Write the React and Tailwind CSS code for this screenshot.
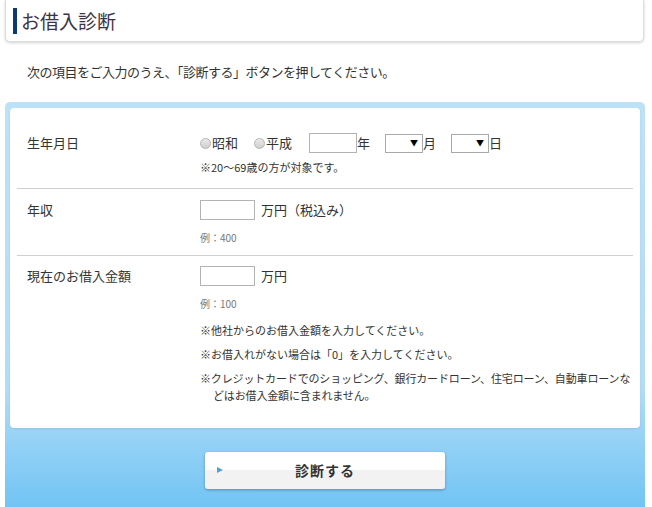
import React from "react";

const jp = { fontFamily: '"Noto Sans CJK JP", "Noto Sans", sans-serif' };

const Radio = ({ label }) => (
  <label className="flex items-center">
    <span className="w-[11px] h-[11px] rounded-full border border-[#b5b5b5] bg-gradient-to-b from-[#e9e9e9] to-[#cfcfcf]"></span>
    <span className="ml-[1px] text-[13px] text-[#333]">{label}</span>
  </label>
);

const Select = () => (
  <div className="flex items-center justify-end w-[38px] h-[19px] border border-[#a9a9a9] bg-white pr-[4px]">
    <span className="text-[8px] leading-none text-black">▼</span>
  </div>
);

const TextBox = ({ w }) => (
  <input
    type="text"
    className={`${w} h-[20px] border border-[#b3b3b3] bg-white outline-none`}
  />
);

const Row = ({ label, last, pt, pb, children }) => (
  <div
    className={`grid grid-cols-[183px_1fr] ${last ? "" : "border-b border-[#cfcfcf]"} ${pt} ${pb}`}
  >
    <div className="pl-[10px] text-[13px] text-[#333] leading-[20px]">{label}</div>
    <div>{children}</div>
  </div>
);

export default function App() {
  return (
    <div className="w-[652px] bg-white text-[#333]" style={jp}>
      <div className="mx-[5px] mr-[8px] h-[42px] flex items-center bg-white border-x border-b border-[#dcdcdc] rounded-b-[5px] shadow-[0_1px_3px_rgba(0,0,0,0.18)]">
        <div className="ml-[7px] w-[4px] h-[26px] bg-[#0c3a72]"></div>
        <h1 className="ml-[4px] text-[19px] text-[#3c3346] leading-none">お借入診断</h1>
      </div>

      <p className="pl-[27px] pt-[20px] pb-[20px] text-[13px] leading-[20px] tracking-[-0.5px] text-[#333]">
        次の項目をご入力のうえ、「診断する」ボタンを押してください。
      </p>

      <div className="mx-[5px] mr-[7px] pt-[6px] px-[5px] pb-[18px] rounded-t-[5px] bg-[linear-gradient(to_bottom,#bce2f8_0%,#b2ddf7_70%,#72c4f4_100%)]">
        <div className="bg-white rounded-[4px] px-[7px] shadow-[0_1px_2px_rgba(0,0,0,0.08)]">
          <Row label="生年月日" pt="pt-[25px]" pb="pb-[13px]">
            <div className="flex items-center h-[20px]">
              <Radio label="昭和" />
              <div className="ml-[16px]">
                <Radio label="平成" />
              </div>
              <div className="ml-[17px]">
                <TextBox w="w-[48px]" />
              </div>
              <span className="text-[13px]">年</span>
              <div className="ml-[15px]">
                <Select />
              </div>
              <span className="text-[13px]">月</span>
              <div className="ml-[15px]">
                <Select />
              </div>
              <span className="text-[13px]">日</span>
            </div>
            <p className="mt-[6px] text-[11px] leading-[16px]">※20〜69歳の方が対象です。</p>
          </Row>

          <Row label="年収" pt="pt-[11px]" pb="pb-[9px]">
            <div className="flex items-center h-[20px]">
              <TextBox w="w-[55px]" />
              <span className="ml-[6px] text-[13px]">万円（税込み）</span>
            </div>
            <p className="mt-[10px] text-[10px] leading-[16px] text-[#777]">例：400</p>
          </Row>

          <Row label="現在のお借入金額" last pt="pt-[10px]" pb="pb-[24px]">
            <div className="flex items-center h-[20px]">
              <TextBox w="w-[55px]" />
              <span className="ml-[6px] text-[13px]">万円</span>
            </div>
            <p className="mt-[10px] text-[10px] leading-[16px] text-[#777]">例：100</p>
            <ul className="mt-[10px] w-[436px] text-[11px] leading-[17px] flex flex-col gap-[7px]">
              <li>※他社からのお借入金額を入力してください。</li>
              <li>※お借入れがない場合は「0」を入力してください。</li>
              <li className="pl-[13px] -indent-[13px] tracking-[-0.15px]">
                ※クレジットカードでのショッピング、銀行カードローン、住宅ローン、自動車ローンなどはお借入金額に含まれません。
              </li>
            </ul>
          </Row>
        </div>

        <div className="flex justify-center mt-[24px]">
          <button className="relative w-[240px] h-[37px] rounded-[3px] bg-[linear-gradient(to_bottom,#ffffff_0%,#ffffff_50%,#f2f2f2_50%,#f2f2f2_100%)] shadow-[0_1px_3px_rgba(0,0,0,0.3)] flex items-center justify-center">
            <span className="absolute left-[12px] top-[15px] w-0 h-0 border-y-[3.5px] border-y-transparent border-l-[6px] border-l-[#4da2da]"></span>
            <span className="text-[14px] font-bold text-[#333] tracking-[1px]">診断する</span>
          </button>
        </div>
      </div>
    </div>
  );
}
